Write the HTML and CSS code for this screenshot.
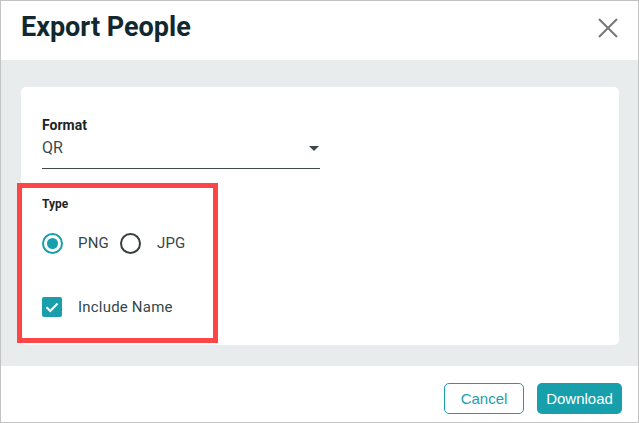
FILE: index.html
```html
<!DOCTYPE html>
<html lang="en">
<head>
  <meta charset="UTF-8" />
  <meta name="viewport" content="width=device-width, initial-scale=1.0"/>
  <title>Export People</title>
  <link rel="stylesheet" href="styles.css">
</head>
<body>
  <div class="dialog">
    <div class="dialog-header">
      <h1>Export People</h1>
      <button class="close-btn" type="button" aria-label="Close">
        <svg width="20" height="20" viewBox="0 0 20 20">
          <path d="M1 1 L19 19 M19 1 L1 19" stroke="#767676" stroke-width="2" fill="none"/>
        </svg>
      </button>
    </div>

    <div class="dialog-body">
      <form class="export-form">
        <div class="field">
          <label class="field-label">Format</label>
          <div class="select">
            <span class="select-value">QR</span>
            <span class="select-arrow"></span>
          </div>
        </div>

        <div class="field type-field">
          <label class="type-label">Type</label>
          <div class="radio-row">
            <span class="radio checked"></span>
            <span class="option-text">PNG</span>
            <span class="radio"></span>
            <span class="option-text">JPG</span>
          </div>
          <div class="check-row">
            <span class="checkbox">
              <svg width="20" height="20" viewBox="0 0 20 20">
                <path d="M4.5 10.2 L8.3 14 L15.5 6.5" stroke="#fff" stroke-width="2" fill="none"/>
              </svg>
            </span>
            <span class="option-text">Include Name</span>
          </div>
        </div>
      </form>
    </div>

    <div class="dialog-footer">
      <button type="button" class="btn btn-outline">Cancel</button>
      <button type="button" class="btn btn-primary">Download</button>
    </div>

    <div class="highlight"></div>
  </div>
</body>
</html>
```

FILE: styles.css
```css
* {
  margin: 0;
  padding: 0;
  box-sizing: border-box;
}

body {
  font-family: Roboto, 'Noto Sans', sans-serif;
  background: #fff;
}

.dialog {
  position: relative;
  width: 639px;
  height: 423px;
  border: 1px solid #c3c3c3;
  display: flex;
  flex-direction: column;
  background: #fff;
}

.dialog-header {
  height: 59px;
  display: flex;
  justify-content: space-between;
  align-items: flex-start;
  padding: 10px 20px 0 20px;
}

.dialog-header h1 {
  font-size: 27px;
  line-height: 32px;
  font-weight: 700;
  color: #11292e;
}

.close-btn {
  background: none;
  border: none;
  margin-top: 7px;
  width: 20px;
  height: 20px;
  cursor: pointer;
}

.close-btn svg {
  display: block;
}

.dialog-body {
  background: #e9eced;
  height: 306px;
  padding: 27px 19px 21px 20px;
}

.export-form {
  background: #fff;
  border-radius: 5px;
  height: 258px;
  padding: 30px 21px 0 21px;
}

.field-label {
  display: block;
  font-size: 14px;
  line-height: 16px;
  font-weight: 700;
  color: #1e2526;
}

.select {
  width: 278px;
  margin-top: 5px;
  padding-bottom: 10px;
  border-bottom: 1px solid #3e4a4c;
  display: flex;
  justify-content: space-between;
  align-items: center;
}

.select-value {
  font-size: 16px;
  line-height: 20px;
  color: #3b4b4d;
}

.select-arrow {
  width: 0;
  height: 0;
  border-left: 5px solid transparent;
  border-right: 5px solid transparent;
  border-top: 5px solid #3c4849;
  margin-right: 1px;
}

.type-field {
  margin-top: 28px;
}

.type-label {
  display: block;
  font-size: 12px;
  line-height: 14px;
  font-weight: 700;
  color: #1e2526;
}

.radio-row,
.check-row {
  display: flex;
  align-items: center;
  height: 20px;
}

.radio-row {
  margin-top: 22px;
}

.check-row {
  margin-top: 44px;
}

.option-text {
  font-size: 15px;
  line-height: 20px;
  letter-spacing: 0.2px;
  color: #34474a;
  margin-left: 16px;
}

.radio-row .option-text:nth-child(2) {
  margin-left: 15px;
  margin-right: 11px;
}

.radio {
  width: 21px;
  height: 21px;
  border-radius: 50%;
  border: 2px solid #383d3e;
  display: flex;
  align-items: center;
  justify-content: center;
}

.radio.checked {
  border-color: #1a9eab;
}

.radio.checked::after {
  content: '';
  width: 11px;
  height: 11px;
  border-radius: 50%;
  background: #1a9eab;
}

.checkbox {
  width: 20px;
  height: 20px;
  border-radius: 2px;
  background: #1a9eab;
}

.checkbox svg {
  display: block;
}

.dialog-footer {
  flex: 1;
  display: flex;
  justify-content: flex-end;
  align-items: flex-start;
  gap: 13px;
  padding: 17px 16px 0 0;
}

.btn {
  height: 31px;
  border-radius: 5px;
  font-family: 'Liberation Sans', Arial, sans-serif;
  font-size: 15px;
  cursor: pointer;
}

.btn-outline {
  width: 80px;
  background: #fff;
  border: 1px solid #1a9eab;
  color: #1a9eab;
}

.btn-primary {
  width: 85px;
  background: #179fab;
  border: none;
  color: #fff;
}

/* red outline around the type options */
.highlight {
  position: absolute;
  left: 16px;
  top: 182px;
  width: 201px;
  height: 160px;
  border: 5px solid #ff4646;
  pointer-events: none;
}
```
